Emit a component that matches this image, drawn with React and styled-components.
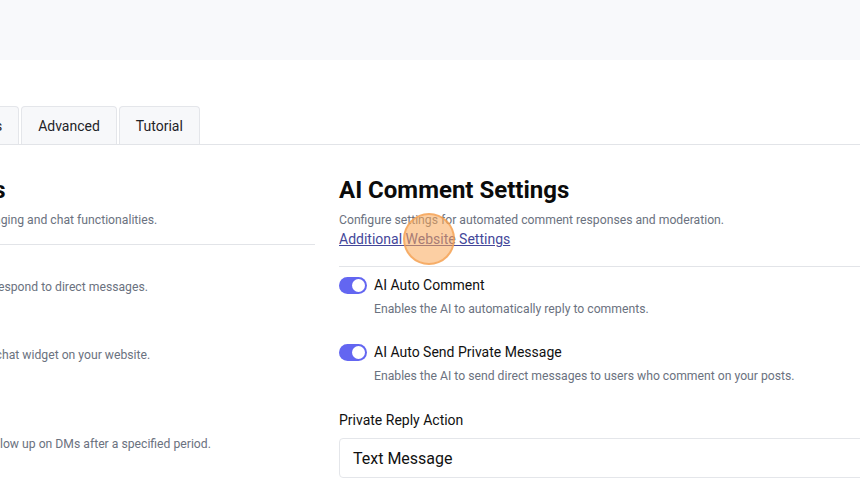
import React from 'react';
import styled, { createGlobalStyle } from 'styled-components';

const GlobalStyle = createGlobalStyle`
body {
margin: 0;
background: #ffffff;
font-family: Roboto, "Liberation Sans", Arial, sans-serif;
overflow: hidden;
}
`
const StyledTopBar = styled.div`
height: 60px;
background-color: #f8f9fb;
`
const StyledMain = styled.div`
margin-left: -156px;
width: 1200px;
padding-top: 46px;
`
const StyledTabs = styled.div`
display: flex;
gap: 2px;
padding-left: 90px;
border-bottom: 1px solid #e2e4e8;
`
const StyledTab = styled.div`
height: 37px;
padding: 0 16px;
display: flex;
align-items: center;
font-size: 14px;
color: #1f2328;
background-color: #f7f8fa;
border: 1px solid #e4e6ea;
border-bottom: none;
border-radius: 4px 4px 0 0;
`
const StyledColumns = styled.div`
display: grid;
grid-template-columns: 471px 640px;
column-gap: 24px;
padding-top: 30px;
`
const StyledColumn = styled.div`
display: flex;
flex-direction: column;
`
const StyledHeading = styled.h2`
margin: 0;
font-size: 24px;
line-height: 30px;
font-weight: 700;
color: #0b0b0b;
`
const StyledSub = styled.p`
margin: 6px 0 0;
font-size: 12.2px;
line-height: 18px;
color: #6b7280;
`
const StyledLinkWrap = styled.div`
position: relative;
`
const StyledLink = styled.a`
font-size: 14px;
line-height: 18px;
color: #44479a;
text-decoration: underline;
`
const StyledCursor = styled.span`
position: absolute;
left: 64px;
top: -16px;
width: 52px;
height: 52px;
border-radius: 50%;
background-color: rgba(249, 168, 88, 0.55);
border: 2px solid rgba(244, 160, 80, 0.7);
box-sizing: border-box;
pointer-events: none;
`
const StyledDivider = styled.hr`
border: none;
border-top: 1px solid #e2e4e8;
margin: ${p => p.$top}px 0 ${p => p.$bottom}px;
`
const StyledOption = styled.div`
display: grid;
grid-template-columns: 28px 1fr;
column-gap: 7px;
row-gap: 6px;
margin-bottom: ${p => p.$gap}px;
`
const StyledToggle = styled.span`
width: 28px;
height: 17px;
border-radius: 9px;
background-color: #6366f1;
display: flex;
align-items: center;
justify-content: flex-end;
padding: 0 2px;
box-sizing: border-box;
&::after {
content: '';
width: 13px;
height: 13px;
border-radius: 50%;
background: #ffffff;
}
`
const StyledLabel = styled.div`
font-size: 14px;
line-height: 17px;
color: #111111;
`
const StyledDesc = styled.div`
grid-column: 2;
font-size: 12.2px;
line-height: 18px;
color: #6b7280;
`
const StyledFieldLabel = styled.div`
font-size: 14px;
line-height: 18px;
color: #111111;
margin-bottom: 9px;
`
const StyledSelect = styled.div`
height: 38px;
border: 1px solid #e4e6ea;
border-radius: 4px;
display: flex;
align-items: center;
padding-left: 13px;
font-size: 16px;
color: #111111;
`

const Option = ({ label, desc, gap }) => (
    <StyledOption $gap={gap}>
        <StyledToggle />
        <StyledLabel>{label}</StyledLabel>
        <StyledDesc>{desc}</StyledDesc>
    </StyledOption>
)

const App = () => {
    return (
        <>
            <GlobalStyle />
            <StyledTopBar />
            <StyledMain>
                <StyledTabs>
                    <StyledTab>Settings</StyledTab>
                    <StyledTab>Advanced</StyledTab>
                    <StyledTab>Tutorial</StyledTab>
                </StyledTabs>
                <StyledColumns>
                    <StyledColumn>
                        <StyledHeading>AI DM Settings</StyledHeading>
                        <StyledSub>Configure settings for messaging and chat functionalities.</StyledSub>
                        <StyledDivider $top={15} $bottom={10} />
                        <Option label="AI Auto DM" desc="Enables the AI bot to respond to direct messages." gap={27} />
                        <Option label="Live Chat" desc="Enables the real-time chat widget on your website." gap={48} />
                        <Option label="Auto Follow Up" desc="Automatically send follow up on DMs after a specified period." gap={0} />
                    </StyledColumn>
                    <StyledColumn>
                        <StyledHeading>AI Comment Settings</StyledHeading>
                        <StyledSub>Configure settings for automated comment responses and moderation.</StyledSub>
                        <StyledLinkWrap>
                            <StyledLink>Additional Website Settings</StyledLink>
                            <StyledCursor />
                        </StyledLinkWrap>
                        <StyledDivider $top={18} $bottom={10} />
                        <Option label="AI Auto Comment" desc="Enables the AI to automatically reply to comments." gap={26} />
                        <Option label="AI Auto Send Private Message" desc="Enables the AI to send direct messages to users who comment on your posts." gap={26} />
                        <StyledFieldLabel>Private Reply Action</StyledFieldLabel>
                        <StyledSelect>Text Message</StyledSelect>
                    </StyledColumn>
                </StyledColumns>
            </StyledMain>
        </>
    )
}
export default App
